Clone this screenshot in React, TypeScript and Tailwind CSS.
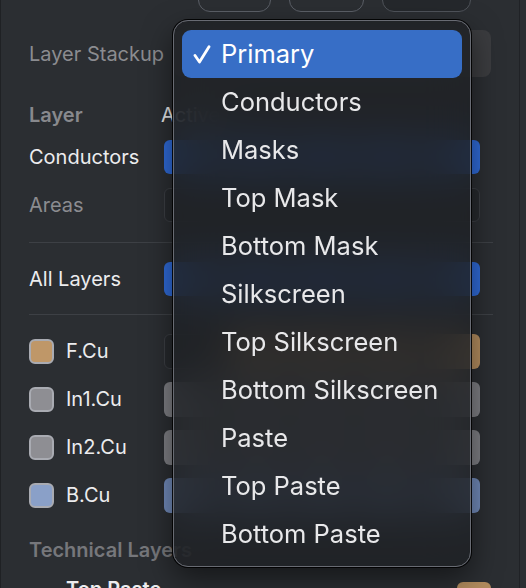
import React from "react";

const menuItems = [
  "Primary",
  "Conductors",
  "Masks",
  "Top Mask",
  "Bottom Mask",
  "Silkscreen",
  "Top Silkscreen",
  "Bottom Silkscreen",
  "Paste",
  "Top Paste",
  "Bottom Paste",
];

type Cell = "blue" | "dark" | "tan" | "gray" | "steel";

const cellClass: Record<Cell, string> = {
  blue: "bg-[#2f6ad6]",
  dark: "bg-[#26292d] border border-[#3b3e43]",
  tan: "bg-[#b38c5e]",
  gray: "bg-[#7d7e83]",
  steel: "bg-[#7089b8]",
};

function Cells({ kinds, tall }: { kinds: Cell[]; tall?: boolean }) {
  return (
    <div className="grid w-[316px] grid-cols-5 gap-[9px]">
      {kinds.map((k, i) => (
        <div key={i} className={`${tall ? "h-[35px]" : "h-[34px]"} rounded-md ${cellClass[k]}`} />
      ))}
    </div>
  );
}

const layers = [
  { name: "F.Cu", swatch: "bg-[#bf9768]", cells: ["dark", "tan", "tan", "tan", "tan"] as Cell[] },
  { name: "In1.Cu", swatch: "bg-[#8e8e93]", cells: ["gray", "gray", "gray", "gray", "gray"] as Cell[] },
  { name: "In2.Cu", swatch: "bg-[#8e8e93]", cells: ["gray", "gray", "gray", "gray", "gray"] as Cell[] },
  { name: "B.Cu", swatch: "bg-[#8aa0c8]", cells: ["steel", "steel", "steel", "steel", "steel"] as Cell[] },
];

export default function App() {
  return (
    <div
      className="relative h-[588px] w-[526px] overflow-hidden bg-[#2b2e32] text-[20px] leading-[28px]"
      style={{ fontFamily: "Inter, 'Noto Sans', sans-serif" }}
    >
      <div className="flex h-full">
        <div className="w-[1px] bg-[#1f2124]" />
        <div className="flex w-[518px] flex-col pl-[28px] *:shrink-0">
          {/* top buttons, clipped */}
          <div className="-mt-[22px] flex h-[34px] gap-[18px] pl-[169px]">
            <div className="h-[34px] w-[73px] rounded-xl border border-[#5b5f67]" />
            <div className="h-[34px] w-[75px] rounded-xl border border-[#5b5f67]" />
            <div className="h-[34px] w-[89px] rounded-xl border border-[#4f535a] bg-[#25282c]" />
          </div>

          {/* layer stackup */}
          <div className="mt-[18px] flex h-[47px] items-center">
            <span className="w-[145px] text-[#8b8c90]">Layer Stackup</span>
            <div className="h-[47px] w-[317px] rounded-lg bg-[#3b3c3f]" />
          </div>

          <div className="mt-[21px] flex h-[34px] items-center">
            <span className="w-[132px] font-semibold text-[#88898d]">Layer</span>
            <span className="text-[#e6e6e8]">Active</span>
          </div>

          <div className="mt-[1px] flex h-[48px] items-center">
            <span className="w-[135px] text-[#ececee]">Conductors</span>
            <Cells kinds={["blue", "blue", "blue", "blue", "blue"]} />
          </div>
          <div className="flex h-[48px] items-center">
            <span className="w-[135px] text-[#8b8c90]">Areas</span>
            <Cells kinds={["dark", "dark", "dark", "dark", "dark"]} />
          </div>

          <div className="mt-[13px] mr-[26px] h-px bg-[#3d4045]" />

          <div className="mt-[12px] flex h-[48px] items-center">
            <span className="w-[135px] text-[#ececee]">All Layers</span>
            <Cells kinds={["blue", "blue", "blue", "blue", "blue"]} />
          </div>

          <div className="mt-[11px] mr-[26px] h-px bg-[#3d4045]" />

          <div className="mt-[12px] flex flex-col">
            {layers.map((l) => (
              <div key={l.name} className="flex h-[48px] items-center">
                <div className="flex w-[135px] items-center gap-[12px]">
                  <div className={`h-[25px] w-[25px] rounded-[6px] border-2 border-[#a9abb2] ${l.swatch}`} />
                  <span className="text-[#ececee]">{l.name}</span>
                </div>
                <Cells kinds={l.cells} tall />
              </div>
            ))}
          </div>

          <div className="mt-[17px] font-semibold text-[#76777b]">Technical Layers</div>
          <div className="mt-[11px] flex items-start">
            <span className="w-[428px] pl-[37px] font-semibold text-[#ececee]">Top Paste</span>
            <div className="mt-[7px] h-[34px] w-[34px] rounded-md bg-[#b38c5e]" />
          </div>
        </div>
        <div className="w-[1px] bg-[#202226]" />
        <div className="flex-1 bg-[#2b2e32]" />
      </div>

      {/* popup menu */}
      <div className="absolute left-[173px] top-[20px] w-[298px] rounded-[15px] ring-1 ring-black/90 shadow-[0_12px_30px_rgba(0,0,0,0.5)]">
        <div className="rounded-[15px] border border-[#686b73] bg-[#1f2125]/[0.82] px-[8px] pt-[9px] pb-[8px] backdrop-blur-[22px]">
          {menuItems.map((item, i) => (
            <div
              key={item}
              className={`relative flex h-[48px] items-center rounded-[9px] pl-[39px] text-[25.5px] ${
                i === 0 ? "bg-[#376ec6] text-white" : "text-[#e8e8ea]"
              }`}
            >
              {i === 0 && (
                <svg
                  className="absolute left-[11px] top-[15px]"
                  width="18"
                  height="19"
                  viewBox="0 0 18 19"
                  fill="none"
                  stroke="white"
                  strokeWidth="2.8"
                  strokeLinecap="round"
                  strokeLinejoin="round"
                >
                  <path d="M2 10.5 L6.5 17 L16 1.8" />
                </svg>
              )}
              {item}
            </div>
          ))}
        </div>
      </div>
    </div>
  );
}
